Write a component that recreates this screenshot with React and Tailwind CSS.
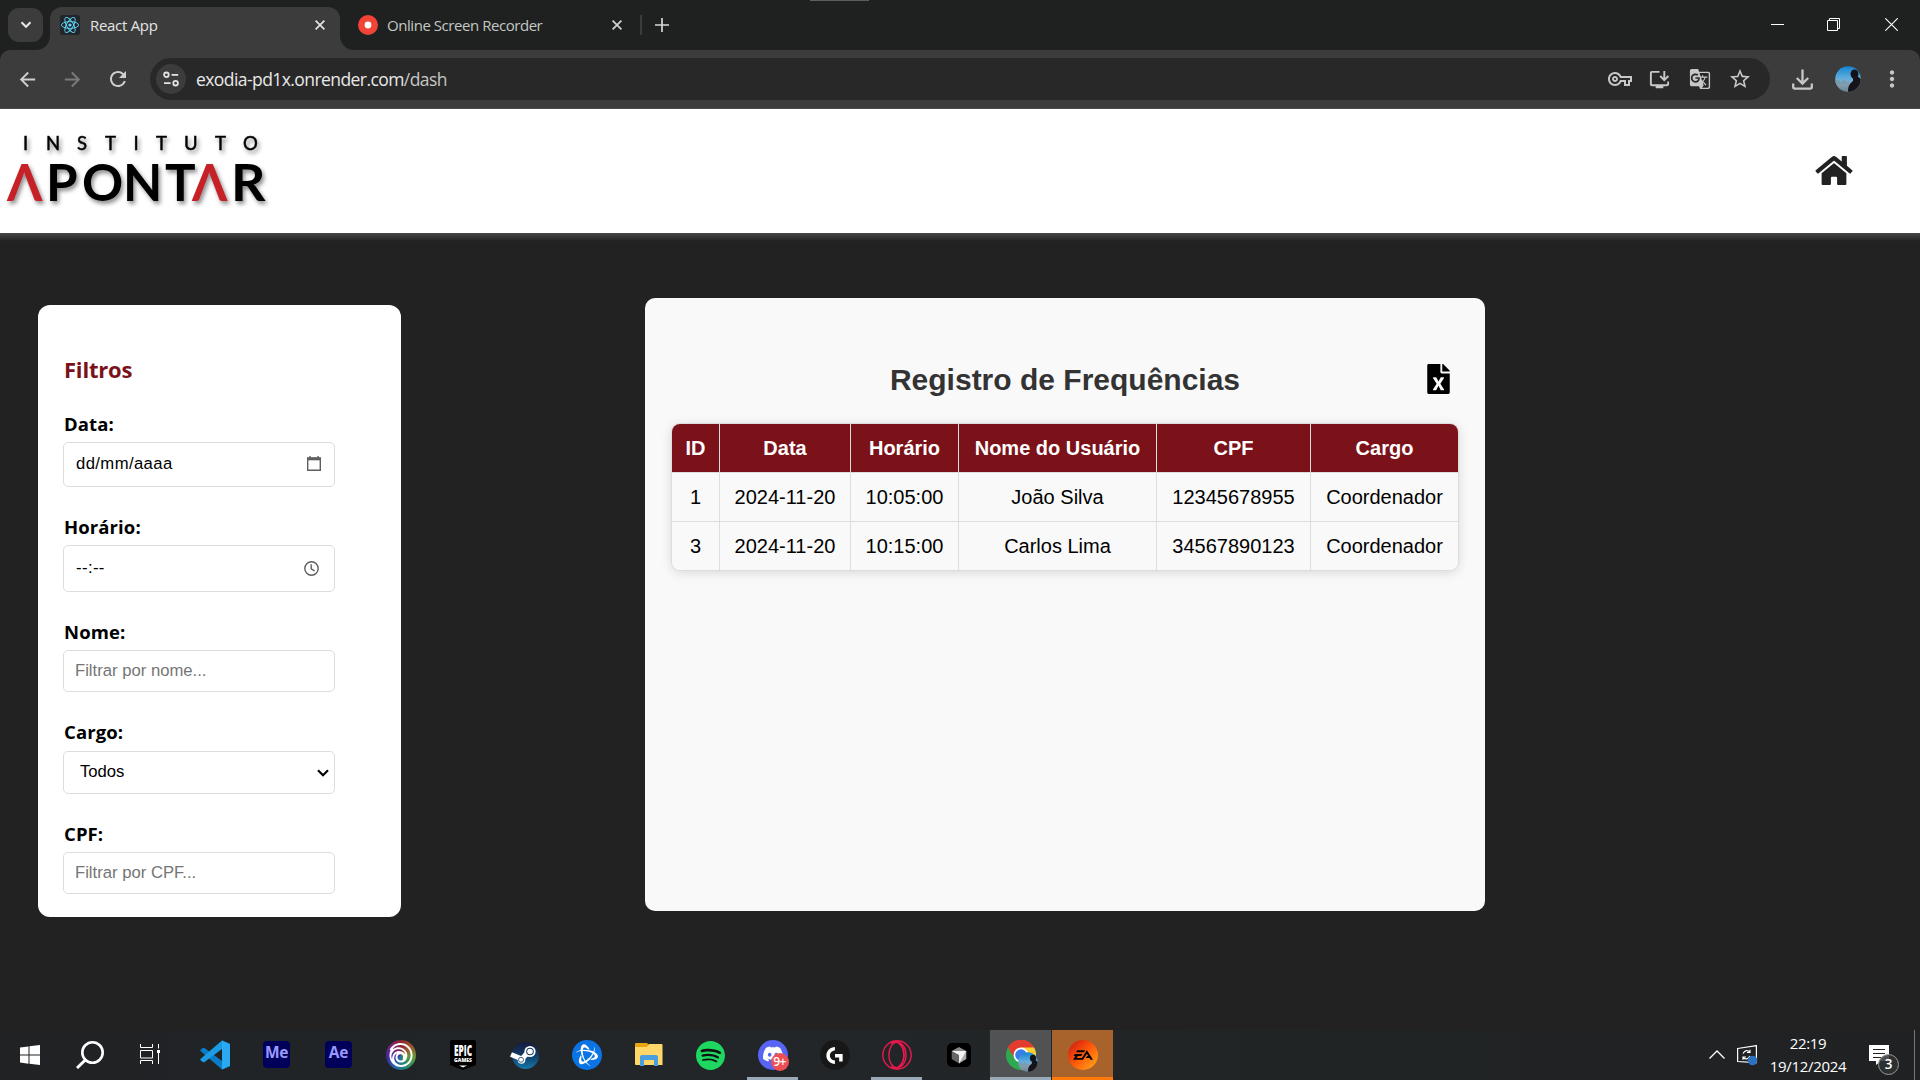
import React from "react";
import { FaHome, FaFileExcel } from "react-icons/fa";
import {
  MdOutlineVpnKey,
  MdOutlineInstallDesktop,
  MdGTranslate,
  MdStarBorder,
  MdArrowBack,
  MdArrowForward,
  MdRefresh,
  MdMoreVert,
} from "react-icons/md";
import { SiUbisoft, SiSteam, SiBattledotnet, SiSpotify, SiDiscord, SiLogitechg, SiEa } from "react-icons/si";

function ReactLogo() {
  return (
    <svg viewBox="0 0 20 20" className="size-5">
      <rect width="20" height="20" rx="2.5" fill="#20262b" />
      <g fill="none" stroke="#61dafb" strokeWidth="0.9">
        <ellipse cx="10" cy="10" rx="8.6" ry="3.4" />
        <ellipse cx="10" cy="10" rx="8.6" ry="3.4" transform="rotate(60 10 10)" />
        <ellipse cx="10" cy="10" rx="8.6" ry="3.4" transform="rotate(120 10 10)" />
      </g>
      <circle cx="10" cy="10" r="1.6" fill="#61dafb" />
    </svg>
  );
}

function Cross({ className }) {
  return (
    <svg viewBox="0 0 10 10" className={className} fill="none" stroke="currentColor" strokeWidth="1.7">
      <path d="M0.6 0.6 9.4 9.4M9.4 0.6 0.6 9.4" />
    </svg>
  );
}

function TabStrip() {
  return (
    <div className="flex h-[50px] bg-[#1f2120] pl-2">
      <div className="mt-2 flex h-[34px] w-[35px] items-center justify-center rounded-[11px] bg-[#3c3c3c]">
        <svg viewBox="0 0 12 8" className="h-2 w-3" fill="none" stroke="#e8e8e8" strokeWidth="2">
          <path d="M1.5 1.2 6 5.8 10.5 1.2" />
        </svg>
      </div>
      <div className="relative ml-[7px] mt-[7px] flex h-[43px] w-[290px] items-center rounded-t-[12px] bg-[#3c3c3c] pb-[7px] pl-[10px]">
        <svg viewBox="0 0 14 14" className="absolute bottom-0 -left-[14px] size-[14px]"><path d="M14 0v14H0A14 14 0 0 0 14 0z" fill="#3c3c3c" /></svg>
        <svg viewBox="0 0 14 14" className="absolute -right-[14px] bottom-0 size-[14px]"><path d="M0 0v14h14A14 14 0 0 1 0 0z" fill="#3c3c3c" /></svg>
        <ReactLogo />
        <span className="ml-[10px] text-[15px] tracking-[-0.3px] text-[#e3e3e3]">React App</span>
        <Cross className="ml-auto mr-[15px] size-[10px] text-[#e3e3e3]" />
      </div>
      <div className="mt-[7px] flex h-9 w-[300px] items-center pl-[18px]">
        <svg viewBox="0 0 20 20" className="size-5"><circle cx="10" cy="10" r="10" fill="#f14336" /><circle cx="10" cy="10" r="3.4" fill="#fff" /></svg>
        <span className="ml-[9px] text-[15px] tracking-[-0.45px] text-[#c4c7c5]">Online Screen Recorder</span>
        <Cross className="ml-auto mr-[18px] size-[10px] text-[#d3d3d3]" />
      </div>
      <div className="mt-[15px] h-5 w-[2px] bg-[#3c3c3c]" />
      <svg viewBox="0 0 14 14" className="ml-[13px] mt-[18px] size-[14px]" stroke="#d8d8d8" strokeWidth="1.7"><path d="M7 0v14M0 7h14" /></svg>
      <div className="ml-[141px] h-px w-[59px] bg-[#5c5e5d]" />
      <div className="ml-auto mr-[22px] mt-[18px] flex h-[13px] items-center text-white">
        <div className="h-px w-[13px] bg-white" />
        <svg viewBox="0 0 13 13" className="ml-[43px] size-[13px]" fill="none" stroke="currentColor"><path d="M0.5 2.5h10v10h-10zM2.5 2.5v-2h10v10h-2" /></svg>
        <svg viewBox="0 0 13 13" className="ml-[45px] size-[13px]" fill="none" stroke="currentColor" strokeWidth="1.1"><path d="M0.3 0.3 12.7 12.7M12.7 0.3 0.3 12.7" /></svg>
      </div>
    </div>
  );
}

function Avatar({ className }) {
  return (
    <svg viewBox="0 0 26 26" className={className}>
      <defs>
        <clipPath id="face"><circle cx="13" cy="13" r="12.8" /></clipPath>
        <linearGradient id="sky" x1="0" y1="0" x2="0" y2="1"><stop stopColor="#1483cf" /><stop offset=".45" stopColor="#5cabdd" /><stop offset=".75" stopColor="#9ab4c4" /><stop offset="1" stopColor="#4c6475" /></linearGradient>
      </defs>
      <g clipPath="url(#face)">
        <rect width="26" height="26" fill="url(#sky)" />
        <path d="M0 15l4-1 2 2 3-3 2 3 3-1v11H0z" fill="#7691a3" opacity=".7" />
        <ellipse cx="19.5" cy="8" rx="4" ry="4.5" fill="#111318" />
        <path d="M18 10h4l4 3v13H13c0-5 1-8 4-10l1-1z" fill="#16141a" />
      </g>
    </svg>
  );
}

function Toolbar() {
  return (
    <div className="bg-[#1f2120]">
      <div className="flex h-[59px] items-center rounded-t-[10px] border-b border-[#4a4a4a] bg-[#3c3c3c] pl-4">
        <MdArrowBack className="size-[23px] text-[#cfcfcf]" />
        <MdArrowForward className="ml-[22px] size-[23px] text-[#7b7b7b]" />
        <MdRefresh className="ml-[22px] size-[24px] text-[#cfcfcf]" />
        <div className="ml-[20px] flex h-[42px] w-[1620px] items-center rounded-full bg-[#282828] pl-[6px] text-[#c7c7c7]">
          <div className="flex size-[30px] items-center justify-center rounded-full bg-[#3c3c3c]">
            <svg viewBox="0 0 16 16" className="size-4" fill="none" stroke="#e3e3e3" strokeWidth="1.8">
              <circle cx="3.4" cy="3.8" r="2.3" /><path d="M8.6 3.8h6.6M1 12.2h6.6" /><circle cx="12.6" cy="12.2" r="2.3" />
            </svg>
          </div>
          <span className="ml-[10px] text-[17.5px] tracking-[-0.57px] text-[#e8e8e8]">exodia-pd1x.onrender.com<span className="text-[#c7c7c7]">/dash</span></span>
          <MdOutlineVpnKey className="ml-auto size-[24px]" />
          <MdOutlineInstallDesktop className="ml-[16px] size-[23px]" />
          <MdGTranslate className="ml-[18px] size-[22px]" />
          <MdStarBorder className="ml-[17px] mr-[18px] size-[24px]" />
        </div>
        <svg viewBox="0 0 21 21" className="ml-[22px] size-[21px]" fill="none" stroke="#c7c7c7" strokeWidth="2.3"><path d="M10.5 0.5v14M4.8 9l5.7 5.6L16.2 9M1.2 14.5v3.6q0 1.6 1.6 1.6h15.4q1.6 0 1.6-1.6v-3.6" /></svg>
        <Avatar className="ml-[22px] size-[26px]" />
        <MdMoreVert className="ml-[18px] size-[26px] text-[#c7c7c7]" />
      </div>
    </div>
  );
}

function SiteHeader() {
  return (
    <header className="flex h-[124px] items-center justify-between bg-white pr-[67px]">
      <svg viewBox="0 0 280 100" className="h-[100px] w-[280px] [filter:drop-shadow(2px_3px_2px_rgba(0,0,0,0.45))] [font-family:Lato,sans-serif]">
        <text y="28.5" fontSize="18.5" stroke="#000" strokeWidth="0.5" x="23 46 77 105 133.5 156 184 215 243">INSTITUTO</text>
        <text y="79.5" fontSize="51" fontWeight="700" x="7 46 82 123 165 192"><tspan fill="#c52127">Λ</tspan>PONT<tspan fill="#c52127">Λ</tspan></text>
        <text y="79.5" x="231" fontSize="51" fontWeight="700" textLength="34.5" lengthAdjust="spacingAndGlyphs">R</text>
      </svg>
      <FaHome className="mb-[2px] h-[33px] w-[38px] text-[#222]" />
    </header>
  );
}

const box = "flex w-[272px] items-center rounded-[5px] border border-[#ddd] bg-white px-[11px] pb-[2px] text-[16.67px] text-black";
const label = "text-[18.5px] leading-[25px] font-bold tracking-[0.1px] text-black";

function Filters() {
  return (
    <aside className="ml-[38px] mt-[72px] h-[612px] w-[363px] rounded-[12px] bg-white pl-[25px] pt-[49px]">
      <h2 className="pl-px text-[22px] leading-[30px] font-bold tracking-[-0.2px] text-[#7b1119]">Filtros</h2>
      <div className={label + " mt-[27px] pl-px"}>Data:</div>
      <div className={box + " mt-[6px] h-[45px] [font-family:'Liberation_Sans',sans-serif]"}>
        <span className="ml-px tracking-[0.4px]">dd/mm/aaaa</span>
        <svg viewBox="0 0 14 15" className="ml-auto mr-[2px] h-[15px] w-[14px]" fill="none" stroke="#5f5f5f" strokeWidth="1.4"><path d="M0.7 2h12.6v12.3H0.7zM3 0v2M11 0v2" /><path d="M0.7 3h12.6" strokeWidth="2.6" /></svg>
      </div>
      <div className={label + " mt-[27px] pl-px"}>Horário:</div>
      <div className={box + " mt-[6px] h-[47px] [font-family:'Liberation_Sans',sans-serif]"}>
        <span className="ml-px tracking-[0.4px]">--:--</span>
        <svg viewBox="0 0 15 15" className="ml-auto mr-[4px] mt-px size-[15px]" fill="none" stroke="#5f5f5f" strokeWidth="1.4"><circle cx="7.5" cy="7.5" r="6.7" /><path d="M7.2 3.3v4.6l3.4 2" /></svg>
      </div>
      <div className={label + " mt-[27px] pl-px"}>Nome:</div>
      <div className={box + " mt-[6px] h-[42px] [font-family:'Liberation_Sans',sans-serif]"}><span className="text-[#757575]">Filtrar por nome...</span></div>
      <div className={label + " mt-[27px] pl-px"}>Cargo:</div>
      <div className={box + " mt-[7px] h-[43px] [font-family:'Liberation_Sans',sans-serif]"}>
        <span className="ml-[5px]">Todos</span>
        <svg viewBox="0 0 12 8" className="ml-auto mr-[-6px] mt-[2px] h-2 w-3" fill="none" stroke="#000" strokeWidth="2.2"><path d="M1 1.2 6 6.2 11 1.2" /></svg>
      </div>
      <div className={label + " mt-[27px] pl-px"}>CPF:</div>
      <div className={box + " mt-[6px] h-[42px] [font-family:'Liberation_Sans',sans-serif]"}><span className="text-[#757575]">Filtrar por CPF...</span></div>
    </aside>
  );
}

const headings = ["ID", "Data", "Horário", "Nome do Usuário", "CPF", "Cargo"];
const rows = [
  ["1", "2024-11-20", "10:05:00", "João Silva", "12345678955", "Coordenador"],
  ["3", "2024-11-20", "10:15:00", "Carlos Lima", "34567890123", "Coordenador"],
];
const rowGrid = "grid grid-cols-[48px_131px_108px_198px_154px_147px] text-center text-[20px]";

function Records() {
  return (
    <section className="ml-[244px] mt-[65px] h-[613px] w-[840px] rounded-[10px] bg-[#f9f9f9] px-[27px] pt-[61px] [font-family:'Liberation_Sans',sans-serif]">
      <div className="relative flex h-[40px] items-center justify-center">
        <h1 className="text-[30px] font-bold text-[#333]">Registro de Frequências</h1>
        <FaFileExcel className="absolute right-[8px] top-[5px] h-[30px] w-[23px] text-black" />
      </div>
      <div className="mt-[25px] w-[786px] overflow-hidden rounded-[8px] shadow-[0_0_0_1px_#ddd,0_2px_12px_rgba(0,0,0,0.15)]">
        <div className={rowGrid + " h-[48px] bg-[#7b1119] leading-[48px] font-bold text-white"}>
          {headings.map((h) => <div key={h} className="border-r border-[#ddd] last:border-r-0">{h}</div>)}
        </div>
        {rows.map((r) => (
          <div key={r[0]} className={rowGrid + " h-[49px] border-t border-[#ddd] bg-[#f9f9f9] leading-[48px] text-black"}>
            {r.map((c, i) => <div key={i} className="border-r border-[#ddd] last:border-r-0">{c}</div>)}
          </div>
        ))}
      </div>
    </section>
  );
}

function VsCode() {
  return (
    <svg viewBox="0 0 30 30" className="size-[30px]">
      <path d="M22 0.5 30 4v22l-8 3.5L1 11.5q-1.5-1 0-2.2L2.8 8q.8-.6 1.8 0L22 21z" fill="#0a7bc4" />
      <path d="M22 0.5 1 18.5q-1.500 1 0 2.200L2.800 22q.8.6 1.800 0L22 9z" fill="#1b9be4" />
      <path d="M22 0.500 30 4v22l-8 3.500z" fill="#28a9f1" />
    </svg>
  );
}

function Adobe({ text }) {
  return <div className="mb-[2px] flex size-[27px] items-center justify-center rounded-[4px] bg-[#00005b] pb-[2px] text-[15.5px] font-bold tracking-[-0.3px] text-[#9999ff]">{text}</div>;
}

function Ubisoft() {
  return (
    <div className="flex size-[30px] items-center justify-center rounded-full bg-[conic-gradient(#8c2432,#a0572c,#5f9a38,#248a6a,#2468b0,#3a2ba0,#7a2080,#8c2432)]">
      <SiUbisoft className="size-[24px] text-white" />
    </div>
  );
}

function Epic() {
  return (
    <svg viewBox="0 0 26 30" className="h-[30px] w-[26px] overflow-visible [font-family:'Open_Sans',sans-serif]">
      <path d="M2 0h22q2 0 2 2v23L13 30 0 25V2Q0 0 2 0z" fill="#000" />
      <text x="4" y="15.500" fontSize="16" fontWeight="800" fill="#fff" textLength="18" lengthAdjust="spacingAndGlyphs">EPIC</text>
      <text x="4" y="22" fontSize="5" fontWeight="800" fill="#fff" textLength="18" lengthAdjust="spacingAndGlyphs">GAMES</text>
      <path d="M9 25.500h8l-4 2z" fill="#fff" />
    </svg>
  );
}

function Steam() {
  return (
    <svg viewBox="0 0 30 30" className="size-[30px]">
      <defs><linearGradient id="st" x1="0" y1="0" x2="0" y2="1"><stop stopColor="#15193f" /><stop offset=".5" stopColor="#123b67" /><stop offset="1" stopColor="#1279ab" /></linearGradient></defs>
      <circle cx="15.500" cy="15.500" r="13.500" fill="url(#st)" />
      <path d="M1 14.500 12 19l7-8" stroke="#fff" strokeWidth="5" fill="none" />
      <circle cx="20" cy="11.500" r="5.600" fill="#fff" /><circle cx="20" cy="11.500" r="3.800" fill="#173a64" /><circle cx="20" cy="11.500" r="2.800" fill="#fff" />
      <circle cx="11.500" cy="20" r="3.800" fill="#fff" /><circle cx="11" cy="19.800" r="2.500" fill="none" stroke="#173a64" strokeWidth=".8" />
    </svg>
  );
}

function Explorer() {
  return (
    <svg viewBox="0 0 28 24" className="mb-px h-[24px] w-[28px]">
      <path d="M1 0h11l2 2v5H0V1q0-1 1-1z" fill="#e5a50f" />
      <path d="M14 1h12.500q1 0 1 1v20H1q-1 0-1-1V4h12z" fill="#ffd768" />
      <path d="M5 23V14q0-2 2-2h14q2 0 2 2v9h-4v-6H9v6z" fill="#4a9fe0" />
    </svg>
  );
}

function Opera() {
  return (
    <svg viewBox="0 0 30 30" className="size-[30px]" fill="none" stroke="#e9194e" strokeWidth="1.400">
      <circle cx="15" cy="15" r="14.200" />
      <ellipse cx="14.500" cy="15" rx="7.600" ry="12.600" />
      <path d="M9 3.500C15-1 24 4 24 15S15 31 9 26.500" />
      <path d="M16.500 3.500c7 4.500 7 18.500 0 23" />
    </svg>
  );
}

function Cursor() {
  return (
    <svg viewBox="0 0 24 24" className="size-6">
      <rect width="24" height="24" rx="5" fill="#000" />
      <path d="M12 4 19.300 8 12 12 4.700 8z" fill="#888" /><path d="M4.700 8 12 12v8.500L4.700 16z" fill="#666" /><path d="M19.300 8v8L12 20.500V12z" fill="#aaa" /><path d="M4.700 8H19.300L12 20.500V12z" fill="#f2f2f2" />
    </svg>
  );
}

function Chrome() {
  return (
    <div className="relative size-[30px]">
      <svg viewBox="0 0 30 30" className="size-[30px]">
        <circle cx="15" cy="15" r="15" fill="#2da94f" />
        <path d="M15 15 2 7.500A15 15 0 0 1 28 7.500L15 8z" fill="#e33b2e" />
        <path d="M2 7.500A15 15 0 0 1 28 7.500H15A7.500 7.500 0 0 0 8.500 18.700z" fill="#e33b2e" />
        <path d="M15 7.500h13A15 15 0 0 1 15 30l6.500-11.200z" fill="#fdd02f" />
        <circle cx="15" cy="15" r="7.500" fill="#fff" /><circle cx="15" cy="15" r="5.800" fill="#3b7de8" />
      </svg>
      <Avatar className="absolute left-3 top-3 size-5" />
    </div>
  );
}

function Discord() {
  return (
    <div className="relative flex size-[30px] items-center justify-center rounded-full bg-[#5865f2]">
      <SiDiscord className="mb-[2px] size-[20px] text-white" />
      <div className="absolute left-[13px] top-[13px] flex size-[18px] items-center justify-center rounded-full bg-[#ed4f54] text-[12px] leading-none font-semibold tracking-[-0.5px] text-white">9+</div>
    </div>
  );
}

const apps = [
  { id: "code", icon: <VsCode /> },
  { id: "me", icon: <Adobe text="Me" /> },
  { id: "ae", icon: <Adobe text="Ae" /> },
  { id: "ubi", icon: <Ubisoft /> },
  { id: "epic", icon: <Epic /> },
  { id: "steam", icon: <Steam /> },
  { id: "bnet", icon: <div className="flex size-[30px] items-center justify-center rounded-full bg-[#0a74e4]"><SiBattledotnet className="size-[22px] text-white" /></div> },
  { id: "files", icon: <Explorer /> },
  { id: "spotify", icon: <div className="rounded-full bg-[#111]"><SiSpotify className="size-[29px] text-[#1ed760]" /></div> },
  { id: "discord", icon: <Discord />, bar: "bg-[#9aa9b8] w-[51px]" },
  { id: "ghub", icon: <div className="flex size-[30px] items-center justify-center rounded-full bg-[#171717]"><SiLogitechg className="size-[17px] text-white" /></div> },
  { id: "opera", icon: <Opera />, bar: "bg-[#9aa9b8] w-[51px]" },
  { id: "cursor", icon: <Cursor /> },
  { id: "chrome", icon: <Chrome />, cell: "bg-[#505254]", bar: "bg-[#9aa9b8] w-[61px]" },
  { id: "ea", icon: <div className="flex size-[30px] items-center justify-center rounded-full bg-[linear-gradient(135deg,#c81212,#ff5a0a_50%,#ffb01c)]"><SiEa className="size-[20px] text-black" /></div>, cell: "bg-[#a8622b]", bar: "bg-[#ff7a0a] w-[61px]" },
];

function Taskbar() {
  return (
    <footer className="flex h-[50px] bg-[linear-gradient(90deg,#202224,#222629_35%,#212526_60%,#202123)] text-white">
      <svg viewBox="0 0 20 20" className="ml-5 mt-[15px] size-5" fill="#fff"><path d="M0 2.600 8.500 1.400V9.500H0zM9.500 1.300 20 0v9.500H9.500zM0 10.500h8.500v8.200L0 17.500zM9.500 10.500H20V20L9.500 18.800z" /></svg>
      <svg viewBox="0 0 28 28" className="ml-9 mt-[11px] size-7" fill="none" stroke="#fff" strokeWidth="2.600"><circle cx="16.500" cy="11.500" r="10.200" /><path d="M9.300 19 1 27" strokeWidth="3" /></svg>
      <svg viewBox="0 0 20 20" className="ml-9 mt-[14px] size-5" fill="none" stroke="#fff" strokeWidth="1"><path d="M0.500 0v3.500h12V0M0.500 20v-3.500h12V20M0.500 6.500h12v7.500H0.500zM18.500 0v4.500M18.500 9v11" /><path d="M17 6h3v3h-3z" fill="#fff" stroke="none" /></svg>
      <div className="ml-6 flex">
        {apps.map((a) => (
          <div key={a.id} className={"mr-px flex h-[50px] w-[61px] flex-col items-center " + (a.cell || "")}>
            <div className="flex h-[47px] items-center justify-center pt-[3px]">{a.icon}</div>
            {a.bar && <div className={"h-[3px] " + a.bar} />}
          </div>
        ))}
      </div>
      <svg viewBox="0 0 16 9" className="ml-auto mt-5 h-[9px] w-4" fill="none" stroke="#fff" strokeWidth="1.300"><path d="M0.500 8.500 8 1l7.500 7.500" /></svg>
      <svg viewBox="0 0 21 21" className="ml-[12px] mt-[15px] size-[21px]" fill="none" stroke="#fff" strokeWidth="1.200"><path d="M0.600 3.500 19.400 0.600v17L0.600 16.500z" /><path d="M6 8.500q3-5 7-1.500V4.800M13 7.500h-3M13 11q-3 5-7 1.500v2.300M6 12h3" /><circle cx="15.500" cy="15.500" r="4.800" fill="#2d72c0" stroke="none" /></svg>
      <div className="ml-[10px] flex w-[80px] flex-col items-center pt-[2px] text-[15px] leading-[23px] tracking-[-0.300px]"><span>22:19</span><span>19/12/2024</span></div>
      <svg viewBox="0 0 30 32" className="ml-[21px] mt-[14px] h-8 w-[30px] [font-family:'Open_Sans',sans-serif]">
        <path d="M0 1h20v16H12l-5 4v-4H0z" fill="#fff" /><path d="M4 5.500h12M4 9.500h12M4 13.500h8" stroke="#222" strokeWidth="1.200" />
        <circle cx="19.500" cy="20.500" r="10" fill="#303234" fillOpacity=".85" stroke="#9a9a9a" /><text x="19.500" y="25.300" textAnchor="middle" fontSize="13.500" fontWeight="600" fill="#fff">3</text>
      </svg>
      <div className="ml-[15px] mr-[5px] w-px bg-[#757779]" />
    </footer>
  );
}

export default function App() {
  return (
    <div className="flex h-[1080px] w-[1920px] flex-col overflow-hidden bg-[#222] [font-family:'Open_Sans','Noto_Sans',sans-serif]">
      <TabStrip />
      <Toolbar />
      <SiteHeader />
      <main className="flex h-[797px] items-start bg-[linear-gradient(#484848,#222_8px)]">
        <Filters />
        <Records />
      </main>
      <Taskbar />
    </div>
  );
}
